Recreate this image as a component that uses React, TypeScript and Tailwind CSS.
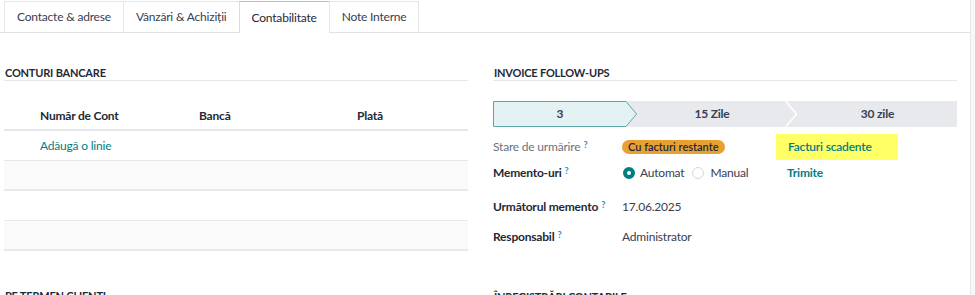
import React from "react";

const Help = () => (
  <sup className="ml-[3px] text-[9px] font-bold text-[#1d8fc8] relative -top-[3px]">?</sup>
);

const Tab = ({ label, active }: { label: string; active?: boolean }) => (
  <div
    className={
      active
        ? "h-[32px] px-[12px] flex items-center border-x border-t border-[#d9dce0] border-t-[#c2b6c4] bg-white -mb-px -ml-px text-[#1f2937]"
        : "h-[31px] px-[12px] flex items-center border-x border-t border-[#e4e6e9] -ml-px first:ml-0 text-[#374151]"
    }
  >
    {label}
  </div>
);

const SectionTitle = ({ children }: { children: React.ReactNode }) => (
  <div className="pl-px border-b border-[#e5e7eb] text-[11px] leading-[14px] font-bold uppercase text-[#1f2937]">
    {children}
  </div>
);

const FieldRow = ({
  label,
  light,
  className,
  children,
}: {
  label: string;
  light?: boolean;
  className?: string;
  children: React.ReactNode;
}) => (
  <div className={"flex items-center " + (className ?? "")}>
    <div className={"w-[129px] " + (light ? "text-[#6b7280]" : "font-bold text-[#1f2937]")}>
      {label}
      <Help />
    </div>
    {children}
  </div>
);

export default function App() {
  return (
    <div
      className="flex w-[975px] h-[295px] overflow-hidden bg-white text-[12px] tracking-[-0.2px] text-[#374151]"
      style={{ fontFamily: "Lato, 'Liberation Sans', sans-serif" }}
    >
      <div className="w-[971px] border-r border-[#e3e5e8] flex flex-col">
        {/* tabs */}
        <div className="flex pl-[4px] pt-[1px] border-b border-[#e0e2e5]">
          <Tab label="Contacte & adrese" />
          <Tab label="Vânzări & Achiziții" />
          <Tab label="Contabilitate" active />
          <Tab label="Note Interne" />
        </div>

        <div className="grid grid-cols-[464px_464px] gap-x-[25px] pl-[4px] pt-[33px]">
          {/* left column */}
          <div>
            <SectionTitle>Conturi bancare</SectionTitle>
            <div className="mt-[21px]">
              <div className="flex h-[29px] items-center border-b-2 border-[#e5e7eb] font-bold text-[#1f2937]">
                <div className="w-[195px] pl-[36px]">Număr de Cont</div>
                <div className="w-[158px]">Bancă</div>
                <div>Plată</div>
              </div>
              <div className="h-[30px] flex items-center pl-[36px] border-b border-[#e5e7eb] text-[#017e84]">
                Adăugă o linie
              </div>
              <div className="h-[30px] bg-[#fafafa] border-b-2 border-[#e8e9eb]" />
              <div className="h-[30px] border-b border-[#e8e9eb]" />
              <div className="h-[30px] bg-[#fafafa] border-b-2 border-[#e8e9eb]" />
            </div>
            <div className="mt-[38px]">
              <SectionTitle>Pe termen clienti</SectionTitle>
            </div>
          </div>

          {/* right column */}
          <div>
            <SectionTitle>Invoice follow-ups</SectionTitle>
            <div className="mt-[20px] flex h-[26px] bg-[#e7e9ed] font-bold text-[#374151]">
              <div className="relative w-[144px] flex items-center justify-center pr-[10px]">
                <svg className="absolute inset-0" width="144" height="26" viewBox="0 0 144 26">
                  <polygon points="0.5,0.5 133,0.5 143.5,13 133,25.5 0.5,25.5" fill="#e5f2f3" stroke="#5ba8aa" strokeWidth="1" />
                </svg>
                <span className="relative">3</span>
              </div>
              <div className="relative w-[161px] flex items-center justify-center pr-[11px]">
                <svg className="absolute right-0 top-0" width="13" height="26" viewBox="0 0 13 26">
                  <polyline points="0.5,0 11.5,13 0.5,26" fill="none" stroke="#ffffff" strokeWidth="1.5" />
                </svg>
                <span>15 Zile</span>
              </div>
              <div className="flex-1 flex items-center justify-center">30 zile</div>
            </div>

            <FieldRow label="Stare de urmărire" light className="mt-[7px] h-[26px]">
              <div className="w-[154px]">
                <span className="inline-block rounded-full bg-[#e8a033] px-[6px] text-[11px] leading-[14px] font-semibold tracking-normal text-[#1f2937]">
                  Cu facturi restante
                </span>
              </div>
              <div className="w-[122px] h-[26px] bg-[#ffff66] flex items-center pl-[12px] text-[#017e84] font-semibold">
                Facturi scadente
              </div>
            </FieldRow>

            <FieldRow label="Memento-uri" className="h-[26px]">
              <div className="w-[165px] flex items-center">
                <span className="ml-[1px] w-[12px] h-[12px] rounded-full border-[4px] border-[#017e84] bg-white" />
                <span className="ml-[5px]">Automat</span>
                <span className="ml-[8px] w-[12px] h-[12px] rounded-full border border-[#d5d8dc] bg-white" />
                <span className="ml-[6px]">Manual</span>
              </div>
              <div className="font-bold text-[#017e84]">Trimite</div>
            </FieldRow>

            <FieldRow label="Următorul memento" className="mt-[6px] h-[30px]">
              <div>17.06.2025</div>
            </FieldRow>

            <FieldRow label="Responsabil" className="h-[30px]">
              <div>Administrator</div>
            </FieldRow>

            <div className="mt-[38px]">
              <SectionTitle>Înregistrări contabile</SectionTitle>
            </div>
          </div>
        </div>
      </div>
      <div className="flex-1 bg-[#f7f7f8]" />
    </div>
  );
}
